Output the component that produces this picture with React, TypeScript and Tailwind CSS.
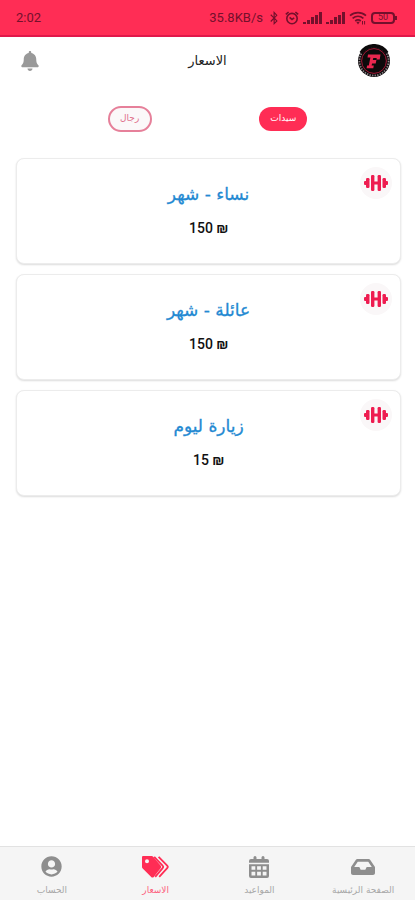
import React from 'react';
import { FaBell, FaBluetoothB, FaInbox, FaUserCircle } from 'react-icons/fa';

interface Plan {
  id: string;
  name: string;
  price: number;
}

interface NavItem {
  id: string;
  label: string;
  icon: React.ReactNode;
}

const plans: Plan[] = [
  { id: 'women-month', name: 'نساء - شهر', price: 150 },
  { id: 'family-month', name: 'عائلة - شهر', price: 150 },
  { id: 'day-visit', name: 'زيارة ليوم', price: 15 },
];

const SignalIcon = () => (
  <svg viewBox="0 0 19 12" className="h-3 w-[19px]" fill="currentColor" aria-hidden="true">
    <rect x="0" y="10" width="3" height="2" />
    <rect x="4" y="8" width="3" height="4" />
    <rect x="8" y="5" width="3" height="7" />
    <rect x="12" y="3" width="3" height="9" />
    <rect x="16" y="0" width="3" height="12" />
  </svg>
);

const AlarmIcon = () => (
  <svg viewBox="0 0 14 14" className="size-[14px]" fill="none" stroke="currentColor" strokeWidth="1.6" aria-hidden="true">
    <circle cx="7" cy="7.6" r="5.2" />
    <path d="M4.6 6.4 7 8.4l2.2-1.6M.8 3.4 3.6 1M13.2 3.4 10.4 1" />
  </svg>
);

const WifiIcon = () => (
  <svg viewBox="0 0 18 14" className="h-[14px] w-[18px]" fill="none" stroke="currentColor" strokeWidth="1.7" aria-hidden="true">
    <path d="M1 4.6c4.6-4 11.4-4 16 0M3.6 7.4c3.2-2.7 7.6-2.7 10.8 0M6.2 10c1.7-1.3 3.9-1.3 5.6 0" />
    <path d="M7.2 10.8h3.6L9 13.400z" fill="currentColor" stroke="none" />
    <path d="M13.5 10v3.500M15.600 10v3.500" strokeWidth="1" />
  </svg>
);

const LogoIcon = () => (
  <svg viewBox="0 0 34 34" className="size-[34px]" aria-hidden="true">
    <circle cx="17" cy="17" r="16" fill="#0c0a0b" />
    <circle cx="17" cy="17" r="14.6" fill="none" stroke="#8c8488" strokeWidth="1.8" strokeDasharray="1.4 1.2" />
    <path d="M4 9A15.2 15.2 0 0 1 30 9" fill="none" stroke="#0c0a0b" strokeWidth="3.4" />
    <circle cx="17" cy="17" r="12.4" fill="#0c0a0b" stroke="#a31836" strokeWidth="1" />
    <path d="M11 10.500h12.500l-.8 5h-3.200l.2-1.600h-3.400l-.5 2.200h3.600l-.7 3.400h-3.600l-.5 2h2.200l-.5 2.700H9.600l.5-2.700h1.700l1.600-8h-2.900z" fill="#e8274f" />
  </svg>
);

const DumbbellIcon = () => (
  <svg viewBox="0 0 24 18" className="h-[18px] w-6" fill="#ee1c50" aria-hidden="true">
    <rect x="0" y="7" width="3" height="4" rx="1" />
    <rect x="2" y="4" width="3.500" height="10" rx="1.200" />
    <rect x="7" y="1" width="3.400" height="16" rx="1.200" />
    <rect x="9" y="7.500" width="6" height="3" />
    <rect x="13.600" y="1" width="3.400" height="16" rx="1.200" />
    <rect x="18.500" y="4" width="3.500" height="10" rx="1.200" />
    <rect x="21" y="7" width="3" height="4" rx="1" />
  </svg>
);

const CalendarIcon = () => (
  <svg viewBox="0 0 20 22" className="h-[22px] w-5" fill="currentColor" aria-hidden="true">
    <path d="M4.500 1.500a1.500 1.500 0 0 1 3 0V3h5V1.500a1.500 1.500 0 0 1 3 0V3H18a2 2 0 0 1 2 2v1.800H0V5a2 2 0 0 1 2-2h2.500z" />
    <path
      fillRule="evenodd"
      d="M0 8.200h20V20a2 2 0 0 1-2 2H2a2 2 0 0 1-2-2zM2.500 10.200v3.600h3.800v-3.600zM8.100 10.200v3.600h3.800v-3.600zM13.700 10.200v3.600h3.800v-3.600zM2.500 15.800v3.600h3.800v-3.600zM8.100 15.800v3.600h3.800v-3.600zM13.700 15.800v3.600h3.800v-3.600z"
    />
  </svg>
);

const TagsIcon = () => (
  <svg viewBox="0 0 27 22" className="h-[22px] w-[27px]" aria-hidden="true">
    <path
      fillRule="evenodd"
      fill="currentColor"
      d="M1.400 0H9.600c.6 0 1 .2 1.400.6l7.600 8.800c.8.9.8 1.900 0 2.800l-6.800 8.700c-.8.9-1.800.9-2.600.1L.7 12.600C.2 12.100 0 11.600 0 11V1.400C0 .5.500 0 1.400 0zM5 3.200a2 2 0 1 0 0 4 2 2 0 0 0 0-4z"
    />
    <path
      d="M12.200.8l8.400 8.800c.8.8.8 1.600 0 2.500l-7.400 8.800M16.600.8l8.600 8.800c.8.8.8 1.600 0 2.500l-8 8.800"
      fill="none"
      stroke="currentColor"
      strokeWidth="1.800"
    />
  </svg>
);

const navItems: NavItem[] = [
  { id: 'home', label: 'الصفحة الرئيسية', icon: <FaInbox size={24} /> },
  { id: 'schedule', label: 'المواعيد', icon: <CalendarIcon /> },
  { id: 'prices', label: 'الاسعار', icon: <TagsIcon /> },
  { id: 'account', label: 'الحساب', icon: <FaUserCircle size={21} /> },
];

const StatusBar = () => (
  <div
    dir="ltr"
    className="flex h-[37px] items-center justify-between border-b-2 border-[#e0184a] bg-[#ff2d55] pr-[18px] pl-4 font-['Roboto',sans-serif] text-[13px] text-[#74102c]"
  >
    <span>2:02</span>
    <div className="flex items-center gap-1">
      <span>35.8KB/s</span>
      <FaBluetoothB size={14} />
      <AlarmIcon />
      <SignalIcon />
      <SignalIcon />
      <WifiIcon />
      <span className="flex items-center">
        <span className="flex h-3 w-6 items-center justify-center rounded-sm border-2 border-current text-[9px] leading-none">
          50
        </span>
        <span className="h-1 w-0.5 bg-current" />
      </span>
    </div>
  </div>
);

const PlanCard = ({ plan }: { plan: Plan }) => (
  <article className="relative flex h-[106px] flex-col items-center rounded-lg border border-[#ececec] bg-white pt-[21px] shadow-[0_1px_2px_rgba(0,0,0,0.14)]">
    <span className="absolute top-2 right-2 flex size-8 items-center justify-center rounded-full bg-[#faf7f8]">
      <DumbbellIcon />
    </span>
    <h2 className="text-[17px] leading-7 text-[#2389d2] [-webkit-text-stroke:0.3px_#2389d2]">{plan.name}</h2>
    <p dir="ltr" className="mt-2 font-['Roboto','DejaVu_Sans',sans-serif] text-[14px] leading-6 font-medium text-[#111]">
      {plan.price} ₪
    </p>
  </article>
);

const App = () => {
  return (
    <div
      dir="rtl"
      lang="ar"
      className="flex min-h-screen flex-col bg-white font-['DejaVu_Sans',sans-serif]"
    >
      <StatusBar />

      <header className="grid h-12 grid-cols-[1fr_auto_1fr] items-center px-5">
        <div className="ps-1">
          <LogoIcon />
        </div>
        <h1 className="text-[13px] leading-5 text-[#222]">الاسعار</h1>
        <button type="button" aria-label="الإشعارات" className="justify-self-end text-[#999]">
          <FaBell size={20} />
        </button>
      </header>

      <main className="flex-1">
        {/* Category filter */}
        <div className="flex h-[68px] items-center justify-evenly text-[9px]">
          <button
            type="button"
            aria-pressed="true"
            className="h-6 w-12 rounded-full bg-[#ff2d55] text-white"
          >
            سيدات
          </button>
          <button
            type="button"
            aria-pressed="false"
            className="h-[26px] w-11 rounded-full border-2 border-[#e6809a] bg-[#fbf8f9] text-[#e0708c]"
          >
            رجال
          </button>
        </div>

        <div className="flex flex-col gap-[10px] pt-[5px] pr-[14px] pb-4 pl-4">
          {plans.map((plan) => (
            <PlanCard key={plan.id} plan={plan} />
          ))}
        </div>
      </main>

      {/* Bottom navigation */}
      <nav className="grid h-[54px] grid-cols-4 border-t border-[#e2e2e2] bg-[#f5f5f5]">
        {navItems.map((item) => (
          <a
            key={item.id}
            href={`#${item.id}`}
            aria-current={item.id === 'prices' ? 'page' : undefined}
            className={`flex flex-col items-center pt-2 text-[9px] ${
              item.id === 'prices' ? 'text-[#ff2d55]' : 'text-[#8e8e8e]'
            }`}
          >
            <span className="flex h-[23px] items-center">{item.icon}</span>
            <span className="mt-1 leading-4 opacity-75">{item.label}</span>
          </a>
        ))}
      </nav>
    </div>
  );
};

export default App;
